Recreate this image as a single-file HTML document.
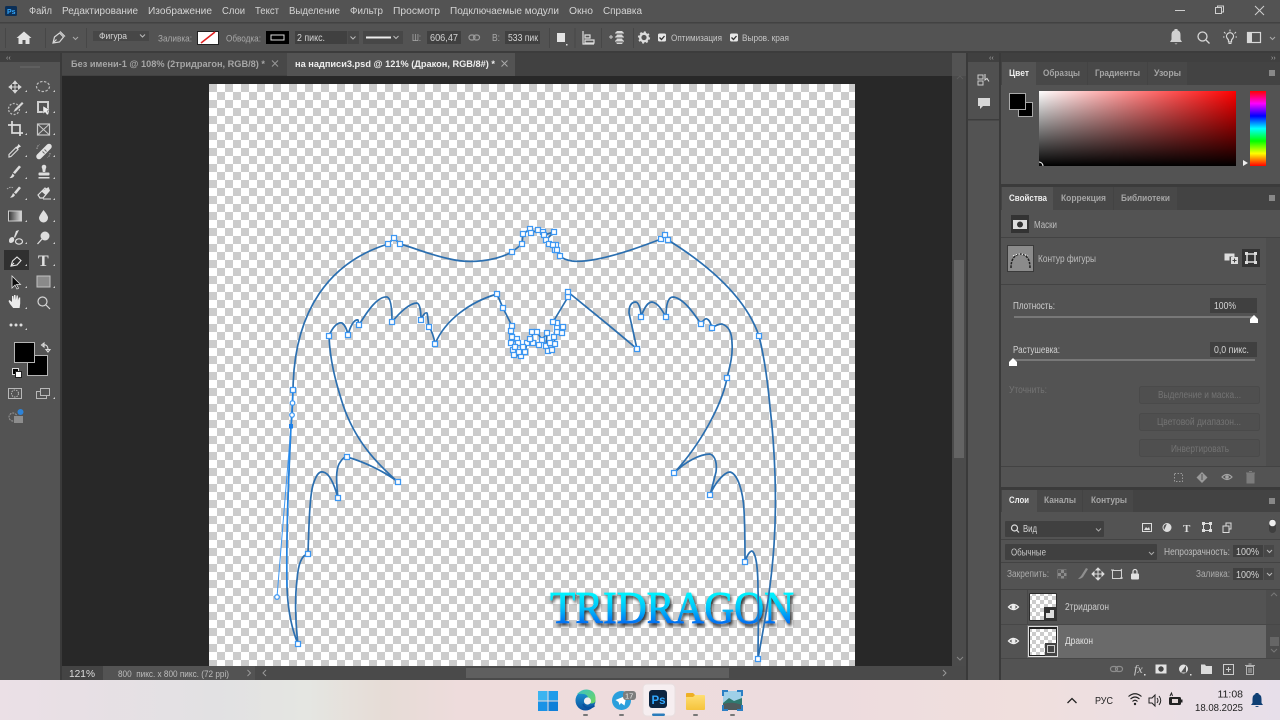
<!DOCTYPE html>
<html lang="ru"><head><meta charset="utf-8"><title>Photoshop</title>
<style>
html,body{margin:0;padding:0;width:1280px;height:720px;overflow:hidden;background:#535353}
svg{display:block;position:absolute;left:0;top:0;filter:blur(.3px)}
text{font-family:"Liberation Sans","Noto Sans CJK SC",sans-serif;font-size:10px;fill:#d4d4d4;white-space:pre}
.d{fill:#a9a9a9}.b{font-weight:bold;fill:#efefef}.m{fill:#a6a6a6;font-weight:bold}.o{fill:#737373}.k{fill:#222}
.ic{fill:#d2d2d2}.st{fill:none;stroke:#d2d2d2;stroke-width:1.3}.tri{fill:#cfcfcf}
.sq{fill:#fff;stroke:#3d97f2;stroke-width:1.250}.cp{fill:none;stroke:#3d97f2;stroke-width:1}
.box{fill:#404040}.ln{fill:#434343}
</style></head><body>
<svg width="1280" height="720" viewBox="0 0 1280 720" xmlns="http://www.w3.org/2000/svg">
<defs>
<pattern id="ch" x="209" y="84" width="16" height="16" patternUnits="userSpaceOnUse"><rect width="16" height="16" fill="#fff"/><rect width="8" height="8" fill="#ccc"/><rect x="8" y="8" width="8" height="8" fill="#ccc"/></pattern>
<pattern id="ch2" width="8" height="8" patternUnits="userSpaceOnUse"><rect width="8" height="8" fill="#fff"/><rect width="4" height="4" fill="#ccc"/><rect x="4" y="4" width="4" height="4" fill="#ccc"/></pattern>
<linearGradient id="tb" x1="0" x2="1" y1="0" y2="0"><stop offset="0" stop-color="#ebe0e6"/><stop offset=".17" stop-color="#e2e1e3"/><stop offset=".24" stop-color="#e5e6e2"/><stop offset=".3" stop-color="#e6dcd6"/><stop offset=".36" stop-color="#eedcdc"/><stop offset=".65" stop-color="#eddcde"/><stop offset=".8" stop-color="#f0dfdd"/><stop offset="1" stop-color="#e7dfea"/></linearGradient>
<linearGradient id="wr" x1="0" x2="1" y1="0" y2="0"><stop offset="0" stop-color="#fff"/><stop offset="1" stop-color="#f00"/></linearGradient>
<linearGradient id="bk" x1="0" x2="0" y1="0" y2="1"><stop offset="0" stop-color="#000" stop-opacity="0"/><stop offset="1" stop-color="#000"/></linearGradient>
<linearGradient id="hue" x1="0" x2="0" y1="0" y2="1"><stop offset="0" stop-color="#f00"/><stop offset=".167" stop-color="#f0f"/><stop offset=".333" stop-color="#00f"/><stop offset=".5" stop-color="#0ff"/><stop offset=".667" stop-color="#0f0"/><stop offset=".833" stop-color="#ff0"/><stop offset="1" stop-color="#f00"/></linearGradient>
<linearGradient id="gr" x1="0" x2="1" y1="0" y2="0"><stop offset="0" stop-color="#333"/><stop offset="1" stop-color="#ddd"/></linearGradient>
<linearGradient id="drg" x1="0" x2="0" y1="592" y2="624" gradientUnits="userSpaceOnUse"><stop offset="0" stop-color="#00f8ff"/><stop offset=".5" stop-color="#00c4fa"/><stop offset="1" stop-color="#0068f0"/></linearGradient>
<linearGradient id="edge" x1="0" x2="0" y1="0" y2="1"><stop offset="0" stop-color="#1e9ed6"/><stop offset="1" stop-color="#0a4f9e"/></linearGradient>
<linearGradient id="edg2" x1="0" x2="1" y1="0" y2="1"><stop offset="0" stop-color="#3ac0c8"/><stop offset="1" stop-color="#6ed85c"/></linearGradient>
<linearGradient id="fold" x1="0" x2="0" y1="0" y2="1"><stop offset="0" stop-color="#ffe27a"/><stop offset="1" stop-color="#f5c33c"/></linearGradient>
<filter id="sh" x="-10%" y="-30%" width="120%" height="170%"><feDropShadow dx="1.5" dy="2.5" stdDeviation="1.5" flood-color="#000" flood-opacity=".85"/></filter>
</defs>

<!-- base -->
<rect width="1280" height="720" fill="#535353"/>
<rect y="22" width="1280" height="1.5" fill="#424242"/>
<rect y="51" width="1280" height="2" fill="#3c3c3c"/>

<!-- menu bar -->
<rect x="5" y="6" width="12" height="10" rx="1.5" fill="#0c2f56"/>
<text x="7" y="14" style="font-size:7px;font-weight:bold;fill:#31a8ff">Ps</text>
<text x="29" y="14" textLength="23" lengthAdjust="spacingAndGlyphs">Файл</text>
<text x="62" y="14" textLength="76" lengthAdjust="spacingAndGlyphs">Редактирование</text>
<text x="148" y="14" textLength="64" lengthAdjust="spacingAndGlyphs">Изображение</text>
<text x="222" y="14" textLength="23" lengthAdjust="spacingAndGlyphs">Слои</text>
<text x="255" y="14" textLength="24" lengthAdjust="spacingAndGlyphs">Текст</text>
<text x="289" y="14" textLength="51" lengthAdjust="spacingAndGlyphs">Выделение</text>
<text x="350" y="14" textLength="33" lengthAdjust="spacingAndGlyphs">Фильтр</text>
<text x="393" y="14" textLength="47" lengthAdjust="spacingAndGlyphs">Просмотр</text>
<text x="450" y="14" textLength="109" lengthAdjust="spacingAndGlyphs">Подключаемые модули</text>
<text x="569" y="14" textLength="24" lengthAdjust="spacingAndGlyphs">Окно</text>
<text x="603" y="14" textLength="39" lengthAdjust="spacingAndGlyphs">Справка</text>
<path d="M1175 10.5h10" stroke="#cfcfcf" fill="none"/>
<path d="M1215.500 7.500h6v6h-6zM1217.500 7.500v-1.500h6v6h-2" stroke="#cfcfcf" fill="none"/>
<path d="M1255 6l9 9M1264 6l-9 9" stroke="#cfcfcf" fill="none"/>

<!-- options bar -->
<rect x="5" y="28" width="1" height="20" fill="#474747"/>
<path d="M24 31.500l-7.500 6.500h2v6h4v-4h3v4h4v-6h2z" fill="#e2e2e2"/>
<rect x="45" y="28" width="1" height="20" fill="#474747"/>
<g fill="none" stroke="#d8d8d8" stroke-width="1.2"><path d="M53 43l1.500-6 5-4 4 4-4 5z"/><path d="M53 43l3.500-3.500"/><path d="M60 31.500l5 5"/></g>
<path d="M73 37l2.500 2.500 2.500-2.500" stroke="#aaa" fill="none"/>
<rect x="86" y="28" width="1" height="20" fill="#474747"/>
<rect x="93" y="31" width="56" height="10" fill="#474747"/>
<text x="99" y="39" textLength="28" lengthAdjust="spacingAndGlyphs" style="font-size:9.500px">Фигура</text>
<path d="M140 34.500l2.500 2.500 2.500-2.500" stroke="#bbb" fill="none"/>
<text x="158" y="41.500" textLength="34" lengthAdjust="spacingAndGlyphs" class="d" style="font-size:9.500px">Заливка:</text>
<rect x="197.500" y="31.500" width="21" height="13" fill="#fff" stroke="#222"/><path d="M201 43l14-11" stroke="#e02020" stroke-width="1.500"/>
<text x="226" y="41.500" textLength="35" lengthAdjust="spacingAndGlyphs" class="d" style="font-size:9.500px">Обводка:</text>
<rect x="266" y="31" width="23" height="13" fill="#000"/><rect x="271" y="35" width="13" height="5" fill="none" stroke="#ddd"/>
<rect x="295" y="31" width="52" height="13" class="box"/>
<text x="297" y="41" textLength="28" lengthAdjust="spacingAndGlyphs">2 пикс.</text>
<rect x="347.500" y="31" width="11.500" height="13" fill="#474747"/><path d="M350.500 36.500l2.500 2.500 2.500-2.500" stroke="#bbb" fill="none"/>
<rect x="363" y="31" width="40" height="13" fill="#474747"/><rect x="366" y="36.500" width="25" height="2" fill="#eee"/><path d="M393.500 36l2.500 2.500 2.500-2.500" stroke="#bbb" fill="none"/>
<text x="412" y="41" textLength="9" lengthAdjust="spacingAndGlyphs" class="d">Ш:</text>
<rect x="427" y="31" width="34" height="13" class="box"/><text x="430" y="41" textLength="28" lengthAdjust="spacingAndGlyphs">606,47</text>
<g fill="none" stroke="#9c9c9c" stroke-width="1.200"><rect x="469" y="35" width="6" height="5" rx="2.500"/><rect x="473.500" y="35" width="6" height="5" rx="2.500"/></g>
<text x="492" y="41" textLength="8" lengthAdjust="spacingAndGlyphs" class="d">В:</text>
<rect x="505" y="31" width="35" height="13" class="box"/><text x="508" y="41" textLength="30" lengthAdjust="spacingAndGlyphs">533 пик</text>
<rect x="549" y="28" width="1" height="20" fill="#474747"/>
<rect x="557" y="33" width="8" height="9" fill="#e4e4e4"/><rect x="566" y="44" width="1.500" height="1.500" fill="#ddd"/>
<rect x="574.500" y="28" width="1" height="20" fill="#474747"/>
<path d="M583 31v13h11M585 35h5v3h-5zM585 40h9v3h-9z" fill="none" stroke="#ddd" stroke-width="1.200"/>
<rect x="601" y="28" width="1" height="20" fill="#474747"/>
<path d="M609 37h4M611 35v4" stroke="#ccc"/><path d="M617 31h5l2 2-2 2 2 2-2 2 2 2-2 3h-5l-2-3 2-2-2-2 2-2-2-2z" fill="#d8d8d8"/><path d="M616 34h7M616 38h7M616 42h7" stroke="#535353"/>
<rect x="633" y="28" width="1" height="20" fill="#474747"/>
<circle cx="644" cy="37.500" r="3.800" fill="none" stroke="#ddd" stroke-width="2.400"/><circle cx="644" cy="37.500" r="5.400" fill="none" stroke="#ddd" stroke-width="1.400" stroke-dasharray="2 2.200"/>
<rect x="658" y="33.500" width="8" height="8" rx="1.500" fill="#e8e8e8"/><path d="M659.500 37.500l2 2 3-3.500" stroke="#333" fill="none" stroke-width="1.300"/>
<text x="671" y="41" textLength="51" lengthAdjust="spacingAndGlyphs" style="font-size:9.500px;fill:#c6c6c6">Оптимизация</text>
<rect x="730" y="33.500" width="8" height="8" rx="1.500" fill="#e8e8e8"/><path d="M731.500 37.500l2 2 3-3.500" stroke="#333" fill="none" stroke-width="1.300"/>
<text x="742" y="41" textLength="47" lengthAdjust="spacingAndGlyphs" style="font-size:9.500px;fill:#c6c6c6">Выров. края</text>
<path d="M1170 42h12l-1.500-2.500v-4.500q0-4-3-4.800v-1.200h-3v1.200q-3 .8-3 4.800v4.500z" fill="#d0d0d0"/><path d="M1174.500 43.500h3q-1.500 1.500-3 0z" fill="#d0d0d0"/>
<circle cx="1202.500" cy="36.500" r="4.500" fill="none" stroke="#d8d8d8" stroke-width="1.300"/><path d="M1206 40l3.500 3.500" stroke="#d8d8d8" stroke-width="1.300"/>
<path d="M1227 38a3.500 3.500 0 1 1 6 0l-1.500 2v2h-3v-2z" fill="none" stroke="#d8d8d8" stroke-width="1.200"/><path d="M1230 29.500v2M1224 32l1.500 1.500M1236 32l-1.500 1.500M1223 37h1.500M1235.500 37h1.500" stroke="#d8d8d8"/><path d="M1228.500 43.500h3" stroke="#d8d8d8"/>
<rect x="1247.500" y="32.500" width="13" height="10" fill="none" stroke="#d8d8d8" stroke-width="1.200"/><rect x="1248" y="33" width="4" height="9" fill="#d8d8d8"/>
<path d="M1270 37l2.500 2.500 2.500-2.500" stroke="#aaa" fill="none"/>

<!-- toolbar -->
<rect y="53" width="60" height="9" fill="#404040"/>
<text x="6" y="60" style="font-size:7px;fill:#aaa">‹‹</text>
<rect x="60" y="53" width="2" height="627" fill="#3a3a3a"/>
<rect x="20" y="66" width="20" height="2" fill="#5f5f5f"/>
<rect x="4" y="250" width="25" height="20" fill="#303030"/>
<!-- move / lasso -->
<path d="M15 81v12M9 87h12M15 81l-2 2.500h4zM15 93l-2-2.500h4zM9 87l2.500-2v4zM21 87l-2.500-2v4z" fill="#d6d6d6" stroke="#d6d6d6"/>
<ellipse cx="43" cy="86.500" rx="6.500" ry="5" fill="none" stroke="#bdbdbd" stroke-width="1.200" stroke-dasharray="2.500 1.500"/>
<!-- quick select / object -->
<circle cx="14" cy="109" r="5.500" fill="none" stroke="#b9b9b9" stroke-width="1.300" stroke-dasharray="2 1.500"/><path d="M22 102l-7 7-1.500 3 3-1.500 7-7z" fill="#d6d6d6"/>
<rect x="38" y="102" width="10" height="10" fill="none" stroke="#cfcfcf" stroke-width="2"/><path d="M43 106l7 4-3 1 2 3-2 1-2-3-2 2z" fill="#eee" stroke="#444" stroke-width=".4"/>
<!-- crop / frame -->
<path d="M8 125h12v11M12 121v12h11" fill="none" stroke="#dcdcdc" stroke-width="1.700"/>
<rect x="37.500" y="124" width="12" height="11" fill="none" stroke="#c8c8c8" stroke-width="1.200"/><path d="M37.500 124l12 11M49.500 124l-12 11" stroke="#c8c8c8"/>
<!-- eyedropper / bandaid -->
<path d="M9 157l2-.5 7-7-2-2-7 7z" fill="none" stroke="#d6d6d6" stroke-width="1.200"/><path d="M15.500 147.500l2-1.500 1-2 2.500 2.500-2 1-1.500 2z" fill="#e2e2e2"/>
<path d="M39 156.500l10-10" stroke="#e2e2e2" stroke-width="5.500" stroke-linecap="round"/><path d="M42.500 151.500l2 2M44.500 149.500l2 2" stroke="#6a6a6a"/><path d="M37 149q0-3 2.500-4.500M50 153q0 3-2.500 4.500" fill="none" stroke="#aaa" stroke-dasharray="1.500 1"/>
<!-- brush / stamp -->
<path d="M21 167l-6 7-2-1.500 6-7z" fill="#dedede"/><path d="M12.500 173.500l2 2q-1.500 3-5 2.500q2-1.500 3-4.500z" fill="#dedede"/>
<path d="M42 167h4l-.8 5h-2.400z" fill="#dedede"/><circle cx="44" cy="167" r="2.300" fill="#dedede"/><rect x="38.500" y="172.500" width="11" height="3" rx="1" fill="#dedede"/><rect x="38.500" y="177" width="11" height="1.500" fill="#dedede"/>
<!-- history / eraser -->
<path d="M21 188l-5 6-2-1.500 5-6z" fill="#dedede"/><path d="M13 193l2 2q-1.500 3-5 2.500q2-1.500 3-4.500z" fill="#dedede"/><path d="M7 189q4-3 6-1" stroke="#aaa" fill="none" stroke-dasharray="1.500 1"/>
<path d="M38 195l7-7 4 3-6 7h-3z" fill="none" stroke="#dedede" stroke-width="1.200"/><path d="M41.500 191.500l7-4.500 1.500 3.500-4.500 4.500z" fill="#dedede"/><path d="M43 199h8" stroke="#dedede"/>
<!-- gradient / drop -->
<rect x="8.500" y="211" width="13" height="10" fill="url(#gr)" stroke="#ccc"/>
<path d="M43.500 210q5 6 4.500 8a4.500 4.500 0 0 1-9 0q0-2 4.500-8z" fill="#dedede"/>
<!-- dodge/smudge -->
<path d="M16 231l3-1-4 8-1-1z" fill="#dedede"/><path d="M13 237q-4 0-4 4 0 2 2 2 4-1 3-5z" fill="#dedede"/><ellipse cx="19" cy="241.500" rx="3.500" ry="2.700" fill="none" stroke="#dedede" stroke-width="1.200"/>
<circle cx="45" cy="236" r="4.500" fill="#dedede"/><path d="M42 239l-4.500 5" stroke="#dedede" stroke-width="1.300"/>
<!-- pen / type -->
<g fill="none" stroke="#e6e6e6" stroke-width="1.100"><path d="M11 266l1.500-5 4.500-4 4 3.500-4 4.500z"/><path d="M11 266l3-3"/></g>
<text x="38" y="266" style="font-family:'Liberation Serif',serif;font-size:16px;font-weight:bold;fill:#e0e0e0">T</text>
<!-- arrow / rect -->
<path d="M12 276v12l3-3 2 4 1.500-.8-2-3.700h4z" fill="#0a0a0a" stroke="#e0e0e0" stroke-width=".8"/>
<rect x="37" y="276" width="13" height="11" fill="#8a8a8a" stroke="#c2c2c2"/>
<!-- hand / zoom -->
<path transform="translate(0 2)" d="M10 302l-1.500-3 1-1 2.500 2v-6h1.300l.7 4v-5h1.400l.5 5 .7-4.500h1.300v5l1-3h1.300v6l-.6 4.500h-6.400z" fill="#ececec"/>
<circle cx="42.500" cy="301.500" r="4.500" fill="none" stroke="#d6d6d6" stroke-width="1.200"/><path d="M46 305l4 4" stroke="#d6d6d6" stroke-width="1.200"/>
<circle cx="11" cy="325" r="1.500" fill="#ddd"/><circle cx="16" cy="325" r="1.500" fill="#ddd"/><circle cx="21" cy="325" r="1.500" fill="#ddd"/>
<!-- corner ticks -->
<path d="M27 92h-2l2-2zM55 92h-2l2-2zM27 113h-2l2-2zM55 113h-2l2-2zM27 135h-2l2-2zM55 135h-2l2-2zM27 157h-2l2-2zM55 157h-2l2-2zM27 179h-2l2-2zM55 179h-2l2-2zM27 200h-2l2-2zM55 200h-2l2-2zM27 222h-2l2-2zM55 222h-2l2-2zM27 244h-2l2-2zM55 244h-2l2-2zM27 266h-2l2-2zM55 266h-2l2-2zM27 288h-2l2-2zM55 288h-2l2-2zM27 309h-2l2-2zM27 330h-2l2-2zM55 399h-2l2-2z" fill="#cfcfcf"/>
<!-- swatches -->
<rect x="27.500" y="355.500" width="20" height="20" fill="#000" stroke="#b5b5b5"/>
<rect x="14.500" y="342.500" width="20" height="20" fill="#000" stroke="#b5b5b5"/>
<path d="M43 345q5-1 5 5M41.500 345l2.500-2v4zM48 352l-2-2.500h4z" fill="none" stroke="#ddd" stroke-width="1.100"/>
<rect x="12.500" y="368.500" width="6" height="6" fill="#000" stroke="#ddd"/><rect x="15.500" y="371.500" width="6" height="6" fill="#fff" stroke="#222"/>
<rect x="8.500" y="388.500" width="13" height="10" fill="none" stroke="#b8b8b8"/><circle cx="15" cy="393.500" r="3.500" fill="none" stroke="#b8b8b8" stroke-dasharray="1.500 1"/>
<rect x="36.500" y="391.500" width="10" height="7" fill="none" stroke="#b8b8b8"/><rect x="40.500" y="388.500" width="9" height="7" fill="#535353" stroke="#b8b8b8"/>
<circle cx="13" cy="417" r="4" fill="none" stroke="#999" stroke-dasharray="2 1"/><rect x="14" y="416" width="9" height="7" fill="#8d8d8d"/><circle cx="20.500" cy="412" r="3" fill="#2d83d8"/>

<!-- tab strip -->
<rect x="62" y="53" width="890" height="23" fill="#414141"/>
<rect x="62" y="53" width="225" height="22" fill="#484848"/>
<rect x="287" y="53" width="228" height="23" fill="#535353"/>
<text x="71" y="67" textLength="194" lengthAdjust="spacingAndGlyphs" class="m" style="font-size:9.500px">Без имени-1 @ 108% (2тридрагон, RGB/8) *</text>
<path d="M272 60.500l6 6M278 60.500l-6 6" stroke="#999" fill="none"/>
<text x="295" y="67" textLength="200" lengthAdjust="spacingAndGlyphs" class="b" style="font-size:9.500px">на надписи3.psd @ 121% (Дракон, RGB/8#) *</text>
<path d="M501.500 60.500l6 6M507.500 60.500l-6 6" stroke="#aaa" fill="none"/>

<!-- canvas -->
<rect x="62" y="76" width="890" height="590" fill="#282828"/>
<rect x="209" y="84" width="646" height="582" fill="url(#ch)"/>

<!-- logo text -->
<text x="550" y="623" textLength="244" lengthAdjust="spacingAndGlyphs" filter="url(#sh)" style="font-family:'Liberation Serif',serif;font-size:46px;fill:url(#drg);stroke:url(#drg);stroke-width:.7px">TRIDRAGON</text>

<!-- paths -->
<g fill="none" stroke="#2b6fb0" stroke-width="1.700" stroke-linecap="round" stroke-linejoin="round">
<path d="M291 426C289 470 286 530 287 587C288 615 293 632 298 644C295 620 295 596 297 580C298 566 301 555 308 554C309 520 310 495 313 485C316 475 319 471 323 472C330 473 335 487 338 498C336 480 336 470 339 464C342 459 345 456 347 457C365 462 385 472 398 482C375 462 355 440 343 405C335 380 330 360 329 336C333 326 338 322 342 323C345 325 347 330 348 335C350 327 354 319 358 320L359 325C368 310 378 296 387 297C391 298 392 310 392 322C400 312 410 303 417 303C420 304 421 312 421 320C423 315 425 312 427 313C428 316 428 322 429 327C432 331 434 338 435 344C445 320 470 302 497 294L503 308L512 326L511 331L512 337L511 343L517 339L518 343L513 350L514 355L521 356L525 352L527 343L533 343L532 332L537 332L542 340L547 333L546 346L548 351L552 350L555 344L554 337L557 332L562 333L563 327L557 327L557 323L553 322L568 297L568 292C590 310 615 330 637 349C634 335 631 322 629 313C629 305 632 302 636 302C639 303 641 310 641 317C644 308 648 302 652 302C658 303 662 310 666 317C666 305 668 297 673 297C683 298 693 312 701 324C703 320 706 318 707 319C710 320 711 325 712 328C716 325 720 324 722 324C728 326 732 332 732 343C733 355 730 366 727 378C722 405 700 445 674 473C685 462 700 454 710 454C716 456 717 465 716 472C714 480 712 488 710 495C715 482 725 472 730 472C738 474 743 492 744 510C745 528 745 545 745 562C747 555 750 551 752 551C757 554 758 575 758 590C759 610 758 635 758 659C764 625 771 590 774 545C777 500 775 450 770 407C768 385 765 360 759 336C745 295 705 263 668 240L665 235L661 239C620 255 590 263 572 261C566 260 562 258 560 256L557 250L555 250L553 245L556 245L549 244L546 240L554 232L544 235L543 232L538 230L531 233L530 229L523 234L522 244L512 252C495 261 470 264 450 259C430 255 415 248 400 244L394 238L388 244C330 262 294 310 293 390L292 415L291 426"/>
</g>
<path d="M291 426L277 597" stroke="#3d97f2" stroke-width="1" fill="none"/>
<path d="M291 426C289 470 286 530 287 587" stroke="#1f86ea" stroke-width="1.300" fill="none"/>
<path d="M291 426L293 390" stroke="#1f86ea" stroke-width="1.300" fill="none"/>
<circle cx="277" cy="597" r="2.300" class="sq"/><circle cx="292" cy="415" r="2.300" class="sq"/><circle cx="292.500" cy="403" r="2.300" class="sq"/>
<rect x="289" y="424" width="4" height="4.500" fill="#1c7fe8"/>
<g class="sq">
<rect x="290.500" y="387.500" width="5" height="5"/><rect x="385.500" y="241.500" width="5" height="5"/><rect x="391.500" y="235.500" width="5" height="5"/><rect x="397.500" y="241.500" width="5" height="5"/><rect x="509.500" y="249.500" width="5" height="5"/><rect x="519.500" y="241.500" width="5" height="5"/><rect x="520.500" y="231.500" width="5" height="5"/><rect x="527.500" y="226.500" width="5" height="5"/><rect x="528.500" y="230.500" width="5" height="5"/><rect x="535.500" y="227.500" width="5" height="5"/><rect x="540.500" y="229.500" width="5" height="5"/><rect x="541.500" y="232.500" width="5" height="5"/><rect x="551.500" y="229.500" width="5" height="5"/><rect x="543.500" y="237.500" width="5" height="5"/><rect x="546.500" y="241.500" width="5" height="5"/><rect x="553.500" y="242.500" width="5" height="5"/><rect x="550.500" y="242.500" width="5" height="5"/><rect x="552.500" y="247.500" width="5" height="5"/><rect x="554.500" y="247.500" width="5" height="5"/><rect x="557.500" y="253.500" width="5" height="5"/>
<rect x="658.500" y="236.500" width="5" height="5"/><rect x="662.500" y="232.500" width="5" height="5"/><rect x="665.500" y="237.500" width="5" height="5"/><rect x="756.500" y="333.500" width="5" height="5"/><rect x="755.500" y="656.500" width="5" height="5"/>
<rect x="326.500" y="333.500" width="5" height="5"/><rect x="345.500" y="332.500" width="5" height="5"/><rect x="356.500" y="322.500" width="5" height="5"/><rect x="389.500" y="319.500" width="5" height="5"/><rect x="418.500" y="317.500" width="5" height="5"/><rect x="426.500" y="324.500" width="5" height="5"/><rect x="432.500" y="341.500" width="5" height="5"/><rect x="494.500" y="291.500" width="5" height="5"/><rect x="500.500" y="305.500" width="5" height="5"/>
<rect x="509.500" y="323.500" width="5" height="5"/><rect x="508.500" y="328.500" width="5" height="5"/><rect x="509.500" y="334.500" width="5" height="5"/><rect x="508.500" y="340.500" width="5" height="5"/><rect x="514.500" y="336.500" width="5" height="5"/><rect x="515.500" y="340.500" width="5" height="5"/><rect x="510.500" y="347.500" width="5" height="5"/><rect x="511.500" y="352.500" width="5" height="5"/><rect x="518.500" y="353.500" width="5" height="5"/><rect x="522.500" y="349.500" width="5" height="5"/><rect x="524.500" y="340.500" width="5" height="5"/><rect x="530.500" y="340.500" width="5" height="5"/><rect x="529.500" y="329.500" width="5" height="5"/><rect x="534.500" y="329.500" width="5" height="5"/><rect x="539.500" y="337.500" width="5" height="5"/><rect x="544.500" y="330.500" width="5" height="5"/><rect x="543.500" y="343.500" width="5" height="5"/><rect x="545.500" y="348.500" width="5" height="5"/><rect x="549.500" y="347.500" width="5" height="5"/><rect x="552.500" y="341.500" width="5" height="5"/><rect x="551.500" y="334.500" width="5" height="5"/><rect x="554.500" y="329.500" width="5" height="5"/><rect x="559.500" y="330.500" width="5" height="5"/><rect x="560.500" y="324.500" width="5" height="5"/><rect x="554.500" y="324.500" width="5" height="5"/><rect x="554.500" y="320.500" width="5" height="5"/><rect x="550.500" y="319.500" width="5" height="5"/>
<rect x="512.500" y="344.500" width="5" height="5"/><rect x="520.500" y="344.500" width="5" height="5"/><rect x="527.500" y="336.500" width="5" height="5"/><rect x="536.500" y="342.500" width="5" height="5"/><rect x="547.500" y="340.500" width="5" height="5"/><rect x="516.500" y="349.500" width="5" height="5"/>
<rect x="565.500" y="294.500" width="5" height="5"/><rect x="565.500" y="289.500" width="5" height="5"/><rect x="634.500" y="346.500" width="5" height="5"/><rect x="638.500" y="314.500" width="5" height="5"/><rect x="663.500" y="314.500" width="5" height="5"/><rect x="698.500" y="321.500" width="5" height="5"/><rect x="709.500" y="325.500" width="5" height="5"/><rect x="724.500" y="375.500" width="5" height="5"/><rect x="671.500" y="470.500" width="5" height="5"/><rect x="707.500" y="492.500" width="5" height="5"/><rect x="742.500" y="559.500" width="5" height="5"/>
<rect x="395.500" y="479.500" width="5" height="5"/><rect x="344.500" y="454.500" width="5" height="5"/><rect x="335.500" y="495.500" width="5" height="5"/><rect x="305.500" y="551.500" width="5" height="5"/><rect x="295.500" y="641.500" width="5" height="5"/>
</g>

<!-- canvas scrollbar -->
<rect x="952" y="76" width="14" height="590" fill="#4b4b4b"/>
<rect x="954" y="260" width="10" height="198" fill="#646464"/>
<path d="M957 660l3-3 3 3" stroke="#5c5c5c" fill="none" transform="translate(0 -581)"/><path d="M957 657l3 3 3-3" stroke="#888" fill="none"/>

<!-- status bar -->
<rect x="62" y="666" width="904" height="14" fill="#4a4a4a"/>
<rect x="62" y="666" width="41" height="14" fill="#444"/>
<rect x="103" y="666" width="152" height="14" fill="#535353"/>
<text x="69" y="677" textLength="26" lengthAdjust="spacingAndGlyphs" style="font-size:10.500px;fill:#ddd">121%</text>
<text x="118" y="677" textLength="111" lengthAdjust="spacingAndGlyphs" style="font-size:9.500px;fill:#bdbdbd">800  пикс. x 800 пикс. (72 ppi)</text>
<path d="M247.500 670l3 3-3 3M266 670l-3 3 3 3M943 670l3 3-3 3" stroke="#999" fill="none"/>
<rect x="466" y="668" width="263" height="10" fill="#5f5f5f"/>
<rect x="966" y="53" width="2" height="627" fill="#3a3a3a"/>

<!-- collapsed panel column -->
<rect x="968" y="53" width="31" height="9" fill="#404040"/>
<text x="989" y="60" style="font-size:7px;fill:#aaa">‹‹</text>
<rect x="999" y="53" width="2" height="627" fill="#3a3a3a"/>
<rect x="974" y="66" width="18" height="2" fill="#5f5f5f"/>
<rect x="968" y="62" width="31" height="57" fill="#505050"/>
<rect x="968" y="119" width="31" height="1.500" fill="#3d3d3d"/>
<rect x="978" y="75" width="5" height="4" fill="none" stroke="#ccc"/><rect x="978" y="81" width="5" height="4" fill="none" stroke="#ccc"/><path d="M985 74v6l2-1.500 2 3" stroke="#ddd" fill="none"/>
<path d="M978 98h12v8h-7l-3 3v-3h-2z" fill="#d8d8d8"/>

<!-- right panels -->
<rect x="1001" y="53" width="279" height="9" fill="#404040"/>
<text x="1271" y="60" style="font-size:7px;fill:#aaa">››</text>
<!-- color -->
<rect x="1001" y="62" width="279" height="23" fill="#434343"/>
<rect x="1036" y="62" width="51" height="23" fill="#484848"/><rect x="1088" y="62" width="59" height="23" fill="#484848"/><rect x="1148" y="62" width="39" height="23" fill="#484848"/>
<rect x="1002" y="62" width="34" height="24" fill="#535353"/>
<text x="1009" y="76" textLength="20" lengthAdjust="spacingAndGlyphs" class="b" style="font-size:9.500px">Цвет</text>
<text x="1043" y="76" textLength="37" lengthAdjust="spacingAndGlyphs" class="m" style="font-size:9.500px">Образцы</text>
<text x="1095" y="76" textLength="45" lengthAdjust="spacingAndGlyphs" class="m" style="font-size:9.500px">Градиенты</text>
<text x="1154" y="76" textLength="27" lengthAdjust="spacingAndGlyphs" class="m" style="font-size:9.500px">Узоры</text>
<rect x="1269" y="70" width="6" height="6" fill="#888"/>
<rect x="1018.500" y="102.500" width="14" height="14" fill="#000" stroke="#aaa"/>
<rect x="1009.500" y="93.500" width="16" height="16" fill="#000" stroke="#aaa"/>
<rect x="1039" y="91" width="197" height="75" fill="url(#wr)"/><rect x="1039" y="91" width="197" height="75" fill="url(#bk)"/>
<path d="M1039 162a4 4 0 0 1 4 4" stroke="#fff" fill="none"/>
<rect x="1250" y="91" width="16" height="75" fill="url(#hue)"/>
<path d="M1243 163l5 3-5 3z" fill="#eee" transform="translate(0 -3)"/>
<!-- properties -->
<rect x="1001" y="184" width="279" height="3" fill="#3b3b3b"/>
<rect x="1001" y="187" width="279" height="23" fill="#434343"/>
<rect x="1053" y="187" width="60" height="23" fill="#484848"/><rect x="1114" y="187" width="63" height="23" fill="#484848"/>
<rect x="1002" y="187" width="51" height="24" fill="#535353"/>
<text x="1009" y="201" textLength="38" lengthAdjust="spacingAndGlyphs" class="b" style="font-size:9.500px">Свойства</text>
<text x="1061" y="201" textLength="45" lengthAdjust="spacingAndGlyphs" class="m" style="font-size:9.500px">Коррекция</text>
<text x="1121" y="201" textLength="49" lengthAdjust="spacingAndGlyphs" class="m" style="font-size:9.500px">Библиотеки</text>
<rect x="1269" y="195" width="6" height="6" fill="#888"/>
<rect x="1011" y="215" width="18" height="18" fill="#333"/><rect x="1013" y="220" width="14" height="9" fill="#ddd"/><circle cx="1020" cy="224.500" r="3" fill="#333"/>
<text x="1034" y="228" textLength="23" lengthAdjust="spacingAndGlyphs" style="fill:#bdbdbd">Маски</text>
<rect x="1001" y="237" width="279" height="1" class="ln"/>
<rect x="1266" y="238" width="14" height="228" fill="#4d4d4d"/>
<rect x="1007.500" y="245.500" width="26" height="26" fill="#8b8b8b" stroke="#3a3a3a"/>
<path d="M1011 268q0-13 9.500-14 9.500 1 9.500 14" fill="none" stroke="#222" stroke-width="1.500" stroke-dasharray="2.500 1"/><path d="M1013 256q7-4 15 0" fill="none" stroke="#fff" stroke-dasharray="1.500 1.500"/>
<text x="1038" y="262" textLength="58" lengthAdjust="spacingAndGlyphs" style="fill:#bdbdbd">Контур фигуры</text>
<path d="M1225 254h9v3h-1v-1h-4v4h-4z" fill="#ddd" stroke="#ddd"/><rect x="1231" y="257" width="7" height="7" fill="#ddd"/><path d="M1234.500 258.500v4M1232.500 260.500h4" stroke="#444"/>
<rect x="1242" y="249" width="18" height="18" fill="#333"/><rect x="1247" y="254" width="8" height="8" fill="none" stroke="#ddd" stroke-width="1.500"/><path d="M1245 252h3v3h-3zM1254 252h3v3h-3zM1245 261h3v3h-3zM1254 261h3v3h-3z" fill="#ddd"/>
<rect x="1001" y="284" width="265" height="1" class="ln"/>
<text x="1013" y="309" textLength="42" lengthAdjust="spacingAndGlyphs" style="fill:#d0d0d0">Плотность:</text>
<rect x="1210" y="298" width="47" height="15" class="box"/><text x="1214" y="309" textLength="22" lengthAdjust="spacingAndGlyphs">100%</text>
<rect x="1014" y="316" width="241" height="2" fill="#787878"/><path d="M1254 315l4 4v4h-8v-4z" fill="#fff"/>
<text x="1013" y="353" textLength="47" lengthAdjust="spacingAndGlyphs" style="fill:#d0d0d0">Растушевка:</text>
<rect x="1210" y="342" width="47" height="15" class="box"/><text x="1214" y="353" textLength="35" lengthAdjust="spacingAndGlyphs">0,0 пикс.</text>
<rect x="1014" y="359" width="241" height="2" fill="#787878"/><path d="M1013 358l4 4v4h-8v-4z" fill="#fff"/>
<text x="1009" y="393" textLength="38" lengthAdjust="spacingAndGlyphs" class="o">Уточнить:</text>
<rect x="1139.500" y="386.500" width="120" height="17" rx="2" fill="#4f4f4f" stroke="#4a4a4a"/><text x="1158" y="398" textLength="83" lengthAdjust="spacingAndGlyphs" class="o">Выделение и маска...</text>
<rect x="1139.500" y="413.500" width="120" height="17" rx="2" fill="#4f4f4f" stroke="#4a4a4a"/><text x="1157" y="425" textLength="84" lengthAdjust="spacingAndGlyphs" class="o">Цветовой диапазон...</text>
<rect x="1139.500" y="439.500" width="120" height="17" rx="2" fill="#4f4f4f" stroke="#4a4a4a"/><text x="1171" y="452" textLength="58" lengthAdjust="spacingAndGlyphs" class="o">Инвертировать</text>
<rect x="1001" y="466" width="279" height="1" class="ln"/>
<rect x="1174.500" y="473.500" width="8" height="8" fill="none" stroke="#9a9a9a" stroke-dasharray="1.500 1.500"/>
<path d="M1202 472l5.500 5.500-5.500 5.500-5.500-5.500z" fill="#9a9a9a"/><path d="M1202 474v6" stroke="#535353"/>
<path d="M1222 477q5-5 10 0q-5 5-10 0z" fill="none" stroke="#a4a4a4" stroke-width="1.200"/><circle cx="1227" cy="477" r="1.800" fill="#a4a4a4"/>
<path d="M1247 474h7v9h-7zM1246 473h9M1249 471.500h3" fill="#7c7c7c" stroke="#7c7c7c"/>
<!-- layers -->
<rect x="1001" y="487" width="279" height="3" fill="#3b3b3b"/>
<rect x="1001" y="490" width="279" height="22" fill="#434343"/>
<rect x="1037" y="490" width="45" height="22" fill="#484848"/><rect x="1083" y="490" width="50" height="22" fill="#484848"/>
<rect x="1002" y="490" width="35" height="23" fill="#535353"/>
<text x="1009" y="503" textLength="20" lengthAdjust="spacingAndGlyphs" class="b" style="font-size:9.500px">Слои</text>
<text x="1044" y="503" textLength="32" lengthAdjust="spacingAndGlyphs" class="m" style="font-size:9.500px">Каналы</text>
<text x="1091" y="503" textLength="36" lengthAdjust="spacingAndGlyphs" class="m" style="font-size:9.500px">Контуры</text>
<rect x="1269" y="498" width="6" height="6" fill="#888"/>
<rect x="1005" y="521" width="99" height="16" rx="1" class="box"/>
<circle cx="1014.500" cy="528" r="3" fill="none" stroke="#ddd" stroke-width="1.200"/><path d="M1016.500 530l2.500 2.500" stroke="#ddd" stroke-width="1.200"/>
<text x="1023" y="532" textLength="14" lengthAdjust="spacingAndGlyphs">Вид</text>
<path d="M1096 528.500l2.500 2.500 2.500-2.500" stroke="#aaa" fill="none"/>
<rect x="1142.500" y="523.500" width="9" height="8" fill="none" stroke="#ddd"/><path d="M1144 530l2-3 1.500 1.500 1.500-1.500 1 3z" fill="#ddd"/>
<circle cx="1167" cy="527.500" r="4" fill="none" stroke="#ddd"/><path d="M1167 523.500a4 4 0 0 1 0 8l-3-1z" fill="#ddd"/>
<text x="1183" y="532" style="font-family:'Liberation Serif',serif;font-size:11px;font-weight:bold;fill:#ddd">T</text>
<rect x="1203.500" y="523.500" width="7" height="7" fill="none" stroke="#ddd"/><path d="M1202 522h3v3h-3zM1209 522h3v3h-3zM1202 529h3v3h-3zM1209 529h3v3h-3z" fill="#ddd"/>
<rect x="1223" y="526" width="6" height="6.500" fill="none" stroke="#ddd"/><path d="M1226 526v-3h5v6h-2" fill="none" stroke="#ddd"/>
<rect x="1269" y="519" width="7" height="14" rx="3.500" fill="#3f3f3f"/><circle cx="1272.500" cy="523" r="3.300" fill="#eee"/>
<rect x="1001" y="539" width="279" height="1" class="ln"/>
<rect x="1005" y="544" width="152" height="16" rx="1" class="box"/>
<text x="1011" y="555.500" textLength="35" lengthAdjust="spacingAndGlyphs" style="fill:#c8c8c8">Обычные</text>
<path d="M1149 552l2.500 2.500 2.500-2.500" stroke="#aaa" fill="none"/>
<text x="1164" y="555" textLength="66" lengthAdjust="spacingAndGlyphs" style="fill:#bdbdbd">Непрозрачность:</text>
<rect x="1233" y="545" width="30" height="12" class="box"/><text x="1236" y="555" textLength="23" lengthAdjust="spacingAndGlyphs">100%</text>
<rect x="1264" y="545" width="10" height="12" fill="#474747"/><path d="M1267 550l2.500 2.500 2.500-2.500" stroke="#bbb" fill="none"/>
<rect x="1001" y="562" width="279" height="1" class="ln"/>
<text x="1007" y="577" textLength="42" lengthAdjust="spacingAndGlyphs" style="fill:#aaa">Закрепить:</text>
<rect x="1057.500" y="569.500" width="9" height="9" fill="#8c8c8c"/><path d="M1058 570h3v3h-3zM1064 570h3v3h-3zM1061 573h3v3h-3zM1058 576h3v3h-3zM1064 576h3v3h-3z" fill="#5a5a5a"/>
<path d="M1086 568l-5 8-3 3q3 0 5-2l5-8z" fill="#8f8f8f"/>
<path d="M1098 568.500v11M1092.500 574h11M1098 568l-2 2h4zM1098 580l-2-2h4zM1092 574l2-2v4zM1104 574l-2-2v4z" fill="#ddd" stroke="#ddd"/>
<path d="M1112.500 570.500h9v8h-9zM1111 570h3M1120 578h3M1122 569l-2 2" fill="none" stroke="#d0d0d0"/>
<rect x="1131" y="573.500" width="8" height="6" rx="1" fill="#e0e0e0"/><path d="M1133 573.500v-2a2 2 0 0 1 4 0v2" fill="none" stroke="#e0e0e0" stroke-width="1.200"/>
<text x="1196" y="577" textLength="34" lengthAdjust="spacingAndGlyphs" style="fill:#aaa">Заливка:</text>
<rect x="1233" y="568" width="30" height="12" class="box"/><text x="1236" y="578" textLength="23" lengthAdjust="spacingAndGlyphs">100%</text>
<rect x="1264" y="568" width="10" height="12" fill="#474747"/><path d="M1267 573l2.500 2.500 2.500-2.500" stroke="#bbb" fill="none"/>
<rect x="1001" y="589" width="279" height="1" class="ln"/>
<rect x="1266" y="590" width="14" height="68" fill="#4d4d4d"/>
<rect x="1270" y="637" width="9" height="9" fill="#666"/><path d="M1271 596l3-3 3 3M1271 649l3 3 3-3" stroke="#777" fill="none"/>
<!-- layer 1 -->
<rect x="1027" y="590" width="1" height="34" fill="#474747"/>
<rect x="1001" y="624" width="279" height="1" fill="#474747"/>
<rect x="1029.500" y="593.500" width="27" height="27" rx="1" fill="url(#ch2)" stroke="#2c2c2c"/>
<rect x="1044" y="607" width="13" height="14" fill="#333"/><path d="M1050 610h4v8h-4zM1046 613h4v5h-4z" fill="#ddd"/>
<path d="M1008.500 607q5-5 10 0q-5 5-10 0z" fill="none" stroke="#eee" stroke-width="1.300"/><circle cx="1013.500" cy="607" r="2" fill="#eee"/>
<text x="1065" y="610" textLength="44" lengthAdjust="spacingAndGlyphs" style="fill:#ccc">2тридрагон</text>
<!-- layer 2 -->
<rect x="1027" y="625" width="239" height="33" fill="#6a6a6a"/>
<rect x="1028.500" y="626.500" width="29" height="30" fill="#222" stroke="#ddd"/>
<rect x="1030" y="629" width="26" height="26" fill="url(#ch2)"/>
<rect x="1045" y="643" width="12" height="13" fill="#444"/><rect x="1047.500" y="645.500" width="7" height="7" fill="none" stroke="#ccc"/>
<path d="M1008.500 641q5-5 10 0q-5 5-10 0z" fill="none" stroke="#eee" stroke-width="1.300"/><circle cx="1013.500" cy="641" r="2" fill="#eee"/>
<text x="1065" y="644" textLength="28" lengthAdjust="spacingAndGlyphs" style="fill:#e0e0e0">Дракон</text>
<rect x="1001" y="658" width="279" height="1" fill="#474747"/>
<!-- layer footer -->
<g fill="none" stroke="#8d8d8d" stroke-width="1.200"><rect x="1110.500" y="666.500" width="7" height="5" rx="2.500"/><rect x="1115.500" y="666.500" width="7" height="5" rx="2.500"/></g>
<text x="1134" y="673" style="font-family:'Liberation Serif',serif;font-style:italic;font-size:12px;fill:#ccc">fx</text><rect x="1144" y="674" width="1.500" height="1.500" fill="#ddd"/>
<rect x="1155.500" y="664.500" width="11" height="9" fill="#e2e2e2"/><circle cx="1161" cy="669" r="2.700" fill="#444"/>
<circle cx="1183.500" cy="669" r="4.500" fill="#e2e2e2"/><path d="M1181 672.500l5-7v7z" fill="#535353"/><rect x="1190" y="674" width="1.500" height="1.500" fill="#ddd"/>
<path d="M1201 664.500h4l1 1.500h6v8h-11z" fill="#dcdcdc"/>
<rect x="1223.500" y="664.500" width="10" height="10" fill="none" stroke="#ccc"/><path d="M1228.500 667v5M1226 669.500h5" stroke="#ccc"/>
<path d="M1246.500 666.500h7v8h-7zM1245 665.500h10M1248.500 664h3" fill="none" stroke="#b2b2b2"/><path d="M1249 668v5M1251 668v5" stroke="#b2b2b2"/>

<!-- taskbar -->
<rect y="680" width="1280" height="40" fill="url(#tb)"/>
<rect x="538" y="691" width="9.500" height="9.500" fill="#3cb4f0"/><rect x="548.500" y="691" width="9.500" height="9.500" fill="#1f9cea"/><rect x="538" y="701.500" width="9.500" height="9.500" fill="#1a92e6"/><rect x="548.500" y="701.500" width="9.500" height="9.500" fill="#0f7fd8"/>
<circle cx="585.500" cy="700.500" r="10" fill="url(#edge)"/>
<path d="M577 694q5-5 10-4.500 9 1 8.500 10 0 4-4 4-3 0-3.500-2.500 1-6-4-7-4-.5-7 0z" fill="url(#edg2)"/>
<circle cx="587.500" cy="701" r="3.600" fill="#f2eef0"/>
<path d="M583 704q2 5 8 3.500 2-.5 3.500-2" fill="none" stroke="#0a4f9e" stroke-width="1.800"/>
<rect x="583" y="714" width="5" height="2" rx="1" fill="#777"/>
<circle cx="621.500" cy="700.500" r="9.500" fill="#2a9fdc"/><path d="M615.500 700l11-4.500-2 10-3.500-2.500-1.500 2-1-3z" fill="#fff"/><rect x="623" y="691" width="13" height="9" rx="3" fill="#7d7d7d"/><text x="625" y="698.500" style="font-size:7.500px;fill:#eee">17</text>
<rect x="619" y="714" width="5" height="2" rx="1" fill="#777"/>
<rect x="643" y="684" width="32" height="32" rx="4" fill="#f6eef0" stroke="#e8dfe0"/>
<rect x="649" y="690" width="18" height="18" rx="3" fill="#0c2440"/>
<text x="651.500" y="704" style="font-size:11.500px;font-weight:bold;fill:#31a8ff">Ps</text>
<rect x="652" y="713.500" width="13" height="2.500" rx="1.200" fill="#2a7cbb"/>
<path d="M686 694a1 1 0 0 1 1-1h6l2 2h9a1 1 0 0 1 1 1v13a1 1 0 0 1-1 1h-17a1 1 0 0 1-1-1z" fill="url(#fold)"/><path d="M686 694a1 1 0 0 1 1-1h6l2 2-2 2h-7z" fill="#eeaf24"/>
<rect x="693" y="714" width="5" height="2" rx="1" fill="#777"/>
<rect x="723" y="691" width="19" height="19" fill="#9fd0e8"/><path d="M723 703l6-5 5 3 8-3v12h-19z" fill="#2f7a70"/><path d="M723 704q9-3 19 1v5h-19z" fill="#4f5a5c"/><path d="M723 696v-5h5M737 691h5v5M742 705v5h-5M728 710h-5v-5" fill="none" stroke="#2b7fc4" stroke-width="2"/>
<rect x="730" y="714" width="5" height="2" rx="1" fill="#777"/>
<path d="M1067.500 703l4.500-4.500 4.500 4.500" fill="none" stroke="#222" stroke-width="1.300"/>
<text x="1095" y="704" textLength="18" lengthAdjust="spacingAndGlyphs" class="k">РУС</text>
<g fill="none" stroke="#222" stroke-width="1.100"><path d="M1128.500 696.500q6.500-5.500 13 0M1130.500 699q4.500-4 9 0M1132.500 701.500q2.500-2.500 5 0"/></g><circle cx="1135" cy="704" r="1.200" fill="#222"/>
<path d="M1149 698h3l3-3v11l-3-3h-3z" fill="none" stroke="#222"/><path d="M1157 698q2 2.500 0 5M1159 696q3.500 4.500 0 9" fill="none" stroke="#222"/>
<rect x="1169.500" y="697.500" width="11" height="7" rx="1" fill="#222" stroke="#222"/><rect x="1181" y="699.500" width="1.500" height="3" fill="#222"/><path d="M1170 696l1.500-3 1 3" fill="none" stroke="#222"/><rect x="1172" y="699" width="6" height="4" fill="#e4d8d8"/>
<text x="1243" y="697.500" text-anchor="end" style="font-size:10.500px;fill:#222">11:08</text>
<text x="1243" y="711" text-anchor="end" textLength="48" lengthAdjust="spacingAndGlyphs" style="font-size:10.500px;fill:#222">18.08.2025</text>
<path d="M1251 705h12l-1.500-2v-4q0-4-3-5v-1h-3v1q-3 1-3 5v4z" fill="#0f3f74"/><path d="M1255 706h4q-2 2-4 0z" fill="#0f3f74"/>
</svg>
</body></html>
